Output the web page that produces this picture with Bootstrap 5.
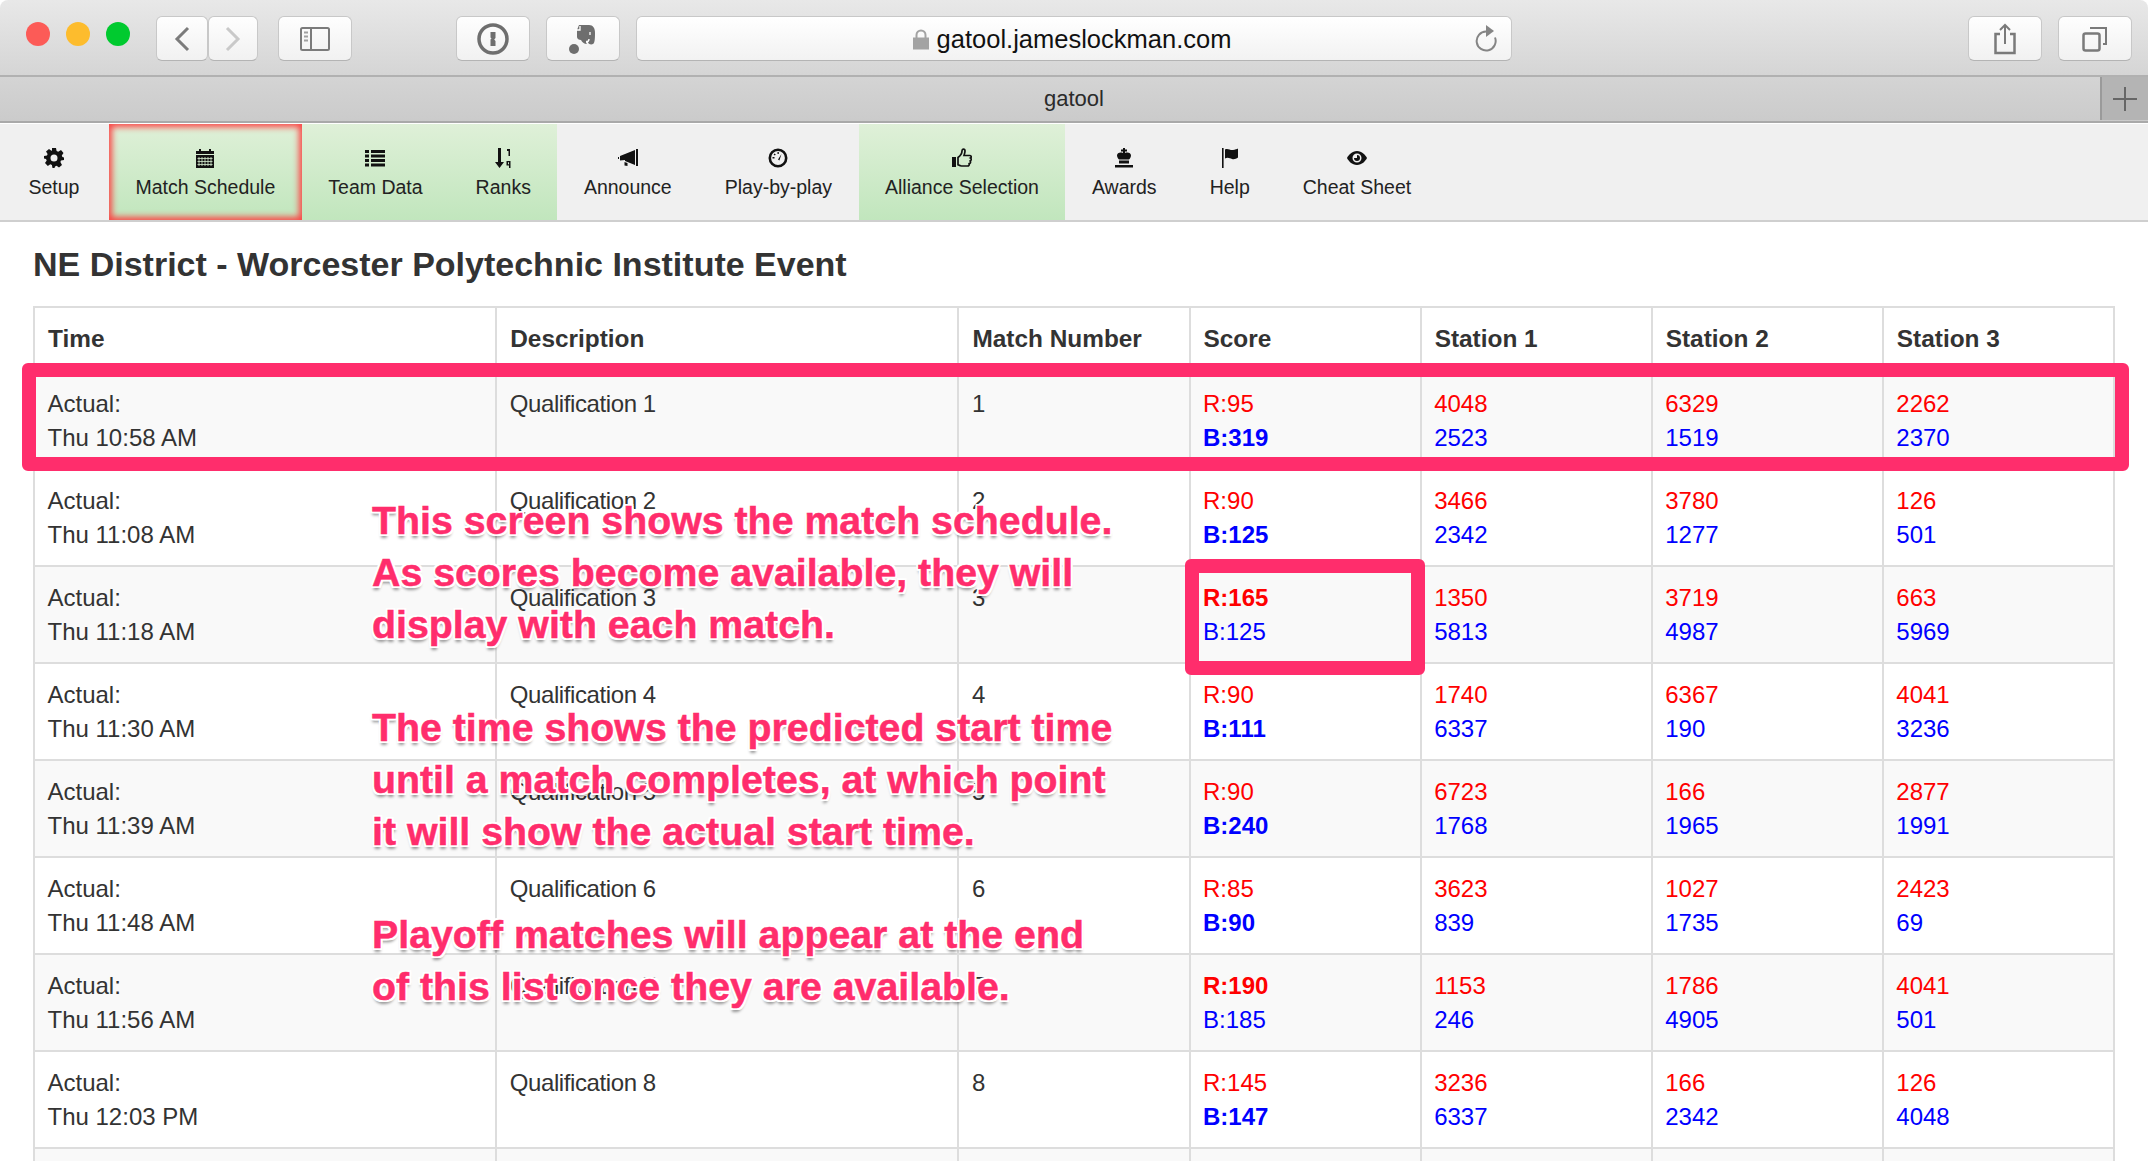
<!DOCTYPE html>
<html lang="en">
<head>
<meta charset="UTF-8">
<title>gatool</title>
<link rel="stylesheet" href="https://cdn.jsdelivr.net/npm/bootstrap@5.3.3/dist/css/bootstrap.min.css">
<style>
html, body { height: 100%; overflow: hidden; }
body { font-family: "Liberation Sans", Arial, sans-serif; background: #fff; color: #333; }
.page-wrap { position: relative; height: 1161px; overflow: hidden; }

.win-bar { height: 75px; padding: 16px 16px 0 26px; background: linear-gradient(#e8e8e8, #d5d5d5); border-radius: 8px 8px 0 0; }
.tl-dot { width: 24px; height: 24px; border-radius: 50%; margin: 6px 16px 0 0; }
.tl-red { background: #fc5b57; }
.tl-yellow { background: #fdbc2d; }
.tl-green { background: #00ca2f; margin-right: 26px; }
.tool-btn { height: 45px; background: linear-gradient(#fefefe, #f1f1f1); border: 1px solid #c8c8c8; border-bottom-color: #b4b4b4; border-radius: 6px; }
.btn-back { width: 52px; }
.btn-fwd { width: 50px; margin-right: 20px; }
.btn-wide { width: 74px; margin-right: 16px; }
.btn-sidebar { margin-right: 104px; }
.btn-share { margin-right: 16px; margin-left: auto; }
.btn-tabs { margin-right: 0; }
.url-box { width: 876px; height: 45px; padding: 1px 4px 0 0; background: linear-gradient(#fff, #f2f2f2); border: 1px solid #c8c8c8; border-bottom-color: #b4b4b4; border-radius: 6px; font-size: 25.5px; color: #111; position: relative; }
.url-reload { position: absolute; right: 13px; top: 7px; }

.tab-strip { height: 48px; padding-bottom: 1px; background: linear-gradient(#d4d4d4, #cbcbcb); border-top: 2px solid #b1b1b1; border-bottom: 2px solid #a9a9a9; font-size: 22px; color: #2b2b2b; }
.tab-title { padding-left: 48px; }
.tab-plus { width: 48px; height: 100%; background: #b4b4b4; border-left: 2px solid #9a9a9a; }

.app-nav { height: 98px; margin-top: 1px; padding: 0 2px; background: #f0f0f0; border-bottom: 2px solid #cfcfcf; }
.app-nav a { height: 96px; padding: 24px 26.5px 0; color: #222; font-size: 19.5px; line-height: 1; text-decoration: none; white-space: nowrap; text-align: center; }
.app-nav svg { display: block; margin: 0 auto 10px; width: 20px; height: 20px; }
.nav-setup { margin-right: 3px; }
.nav-green { background: linear-gradient(#dff0d8, #c1e6bd); }
.nav-current { box-shadow: inset 0 0 6px 3px #fb4545; }

.event-title { margin: 0; padding: 22px 33px 0; height: 84px; font-size: 34px; font-weight: 700; line-height: 40px; color: #333; }

.match-wrap { padding: 0 33px; }
.match-table { table-layout: fixed; width: 2082px; margin: 0; font-size: 24px; line-height: 34px; color: #333; --bs-table-striped-bg: #f9f9f9; --bs-table-striped-color: #333; --bs-table-color: #333; --bs-border-color: #ddd; }
.match-table > :not(caption) > * > * { padding: 14px 13px 11px 12.5px; border-color: #ddd; border-width: 2px; height: 97px; }
.match-table > thead > tr > th { height: 65px; padding: 12px 13px 14px; font-size: 24.4px; font-weight: 700; vertical-align: middle; border-bottom-width: 2px; }
.match-table > tbody { border-top: 0; }
.col-two { width: 22.22%; }
.col-one { width: 11.11%; }
.desc-cell { letter-spacing: -.4px; }
.t-red { color: #f00; display: block; }
.t-blue { color: #00f; display: block; }

.mark-box { position: absolute; border: 14px solid #ff2d6c; border-radius: 6px; }
.mark-row { left: 22px; top: 363px; width: 2107px; height: 108px; }
.mark-score { left: 1185px; top: 559px; width: 240px; height: 116px; }
.note-text { position: absolute; left: 372px; top: 495px; margin: 0; font-size: 39.3px; line-height: 51.8px; font-weight: 700; color: #ff2d6c; white-space: nowrap; -webkit-text-stroke: .5px #ff2d6c; text-shadow: -2px 0 0 #fff, 2px 0 0 #fff, 0 -2px 0 #fff, 0 2px 0 #fff, -2px -2px 0 #fff, 2px -2px 0 #fff, -2px 2px 0 #fff, 2px 2px 0 #fff, 0 4px 3px rgba(0,0,0,.4); }
</style>
</head>
<body>
<div class="page-wrap">

  <div class="win-bar d-flex align-items-start">
    <span class="tl-dot tl-red"></span>
    <span class="tl-dot tl-yellow"></span>
    <span class="tl-dot tl-green"></span>
    <div class="tool-btn btn-back d-flex align-items-center justify-content-center">
      <svg width="18" height="26" viewBox="0 0 18 26"><path d="M15 2 4 13l11 11" fill="none" stroke="#7b7b7b" stroke-width="3"/></svg>
    </div>
    <div class="tool-btn btn-fwd d-flex align-items-center justify-content-center">
      <svg width="18" height="26" viewBox="0 0 18 26"><path d="M3 2l11 11L3 24" fill="none" stroke="#c9c9c9" stroke-width="3"/></svg>
    </div>
    <div class="tool-btn btn-wide btn-sidebar d-flex align-items-center justify-content-center">
      <svg width="30" height="24" viewBox="0 0 30 24"><rect x="1" y="1" width="28" height="22" rx="1.5" fill="none" stroke="#7b7b7b" stroke-width="2"/><path d="M11 1v22" stroke="#7b7b7b" stroke-width="2"/><path d="M4 5.500h4M4 9.500h4M4 13.500h4" stroke="#a0a0a0" stroke-width="2"/></svg>
    </div>
    <div class="tool-btn btn-wide d-flex align-items-center justify-content-center">
      <svg width="32" height="32" viewBox="0 0 32 32"><circle cx="16" cy="16" r="14" fill="none" stroke="#6e6e6e" stroke-width="3.500"/><path d="M13.500 9h5v6l-1.300 1.500 1.300 1.500v5h-5v-6.500l1-1-1-1z" fill="#6e6e6e"/></svg>
    </div>
    <div class="tool-btn btn-wide d-flex align-items-center justify-content-center">
      <svg width="28" height="30" viewBox="0 0 28 30"><circle cx="5" cy="25" r="5" fill="#6e6e6e"/><path d="M10 1h10c4 0 6 3 6 8 0 4 0 10-2 11s-5 0-5-2l-1-2c-1 2-1 3 0 4-3 0-5-2-6-4-2 0-4-1-4-3V6z" fill="#6e6e6e"/><path d="M6 6h5V2M21 8v3M17 18c2 0 3-1 3-3" fill="none" stroke="#fff" stroke-width="1.300"/></svg>
    </div>
    <div class="url-box d-flex align-items-center justify-content-center">
      <svg class="me-2" width="16" height="21" viewBox="0 0 16 21"><path d="M3.500 9V6a4.500 4.500 0 0 1 9 0v3" fill="none" stroke="#a3a3a3" stroke-width="2"/><rect y="8.500" width="16" height="12" fill="#a3a3a3"/></svg>
      <span>gatool.jameslockman.com</span>
      <svg class="url-reload" width="24" height="28" viewBox="0 0 24 28"><path d="M12 7.500a9.500 9.500 0 1 0 9 6" fill="none" stroke="#858585" stroke-width="2"/><path d="M12 1l8 6-8 6z" fill="#858585"/></svg>
    </div>
    <div class="tool-btn btn-wide btn-share d-flex align-items-center justify-content-center">
      <svg width="24" height="32" viewBox="0 0 24 32"><path d="M7 11H2.500v19h19V11H17" fill="none" stroke="#7a7a7a" stroke-width="2.500"/><path d="M12 21V2M7 7l5-5 5 5" fill="none" stroke="#7a7a7a" stroke-width="2"/></svg>
    </div>
    <div class="tool-btn btn-wide btn-tabs d-flex align-items-center justify-content-center">
      <svg width="26" height="26" viewBox="0 0 26 26"><rect x="1.500" y="7.500" width="16" height="17" rx="2" fill="none" stroke="#7a7a7a" stroke-width="2.500"/><path d="M8 2h16v16h-3" fill="none" stroke="#7a7a7a" stroke-width="2"/></svg>
    </div>
  </div>

  <div class="tab-strip d-flex align-items-center">
    <div class="tab-title flex-grow-1 text-center">gatool</div>
    <div class="tab-plus d-flex align-items-center justify-content-center">
      <svg width="24" height="24" viewBox="0 0 24 24"><path d="M12 0v24M0 12h24" stroke="#666" stroke-width="2"/></svg>
    </div>
  </div>

  <nav class="app-nav nav flex-nowrap">
    <a href="#" class="d-block nav-setup">
      <svg viewBox="0 0 20 20"><path fill="#111" fill-rule="evenodd" d="M8 0h4l.6 3 1.600.7L17 2l2.500 3-1.700 2.500.6 1.500 1.600.5v2.500l-3 .6-.6 1.500L18 17l-3 2.500-2.400-1.700-1.600.7-.5 1.500h-2l-.6-3-1.600-.7L3.800 18 1 15l1.700-2.500L2 11l-2-.5V8l3-.6.6-1.500L2 3.500 5 1l2.400 1.700L8 2.500zM10 6.500a3.500 3.500 0 1 0 0 7 3.500 3.500 0 0 0 0-7z"/></svg>
      Setup
    </a>
    <a href="#" class="d-block nav-green nav-current">
      <svg viewBox="0 0 20 20"><path fill="#111" d="M1 3h3V1h2v2h8V1h2v2h3v3H1zM1 7h18v13H1z"/><path stroke="#d6edcf" stroke-width=".8" d="M4 9v9M7 9v9M10 9v9M13 9v9M16 9v9M2.500 10.500h15M2.500 13.500h15M2.500 16.500h15"/></svg>
      Match Schedule
    </a>
    <a href="#" class="d-block nav-green">
      <svg viewBox="0 0 20 20"><path fill="#111" d="M0 2h4v3H0zM6 2h14v3H6zM0 6.500h4v3H0zM6 6.500h14v3H6zM0 11h4v3H0zM6 11h14v3H6zM0 15.500h4v3H0zM6 15.500h14v3H6z"/></svg>
      Team Data
    </a>
    <a href="#" class="d-block nav-green">
      <svg viewBox="0 0 20 20"><path fill="#111" d="M5 0h3v14h3l-4.500 6L2 14h3zM14 1h3v7h-1.500V3H14zM13.500 13h4v7H16v-2.500h-2.500zM15 14.300v2h1v-2z"/></svg>
      Ranks
    </a>
    <a href="#" class="d-block">
      <svg viewBox="0 0 20 20"><path fill="#111" d="M18 1h2v17h-2zM17 2v15L7 13v-1l-5 .5V8l15-6zM6.500 14l3 1v3l-3-.5zM0 9h1v2H0z"/></svg>
      Announce
    </a>
    <a href="#" class="d-block">
      <svg viewBox="0 0 20 20"><circle cx="10" cy="10" r="8.200" fill="none" stroke="#111" stroke-width="2.600"/><path fill="#111" d="M10 11.500 13.500 6 11.400 12.500zM4.500 9h2v1.500h-2zM6.500 5.500l1.300 1-1 1-1.200-1zM9.500 4h1.300v2H9.500z"/></svg>
      Play-by-play
    </a>
    <a href="#" class="d-block nav-green">
      <svg viewBox="0 0 20 20"><path fill="#111" d="M0 9h4v10H0z"/><path fill="none" stroke="#111" stroke-width="1.700" d="M6 9.500c2-1.500 4-3.500 4-6.500 0-2.500 3-2.500 3 0 0 1.500-.5 3-1 4.500h6c1.500 0 1.500 2 .5 2.500 1 .5 1 2.500-.3 3 .6 1 .3 2.500-1 2.700.3 1-.3 2.300-1.700 2.300H9.500c-1.500 0-2.500-.8-3.500-1.300z"/></svg>
      Alliance Selection
    </a>
    <a href="#" class="d-block">
      <svg viewBox="0 0 20 20"><path fill="#111" d="M9 0h2v1.500h2v2h-2V5c3-1 6 0 6 2.500 0 1.500-1 3-2 4H5c-1-1-2-2.500-2-4C3 5 6 4 9 5V3.500H7v-2h2zM5 12.500h10v3H5zM1 17h18v2.500H1z"/></svg>
      Awards
    </a>
    <a href="#" class="d-block">
      <svg viewBox="0 0 20 20"><path fill="#111" d="M2 0h1.600v20H2zM5 1.500c3-1.500 5 1 8 .5 2-.3 4-1 5-1.500v9c-2 1.500-4 2-6 1.500S8 9 5 10.500z"/></svg>
      Help
    </a>
    <a href="#" class="d-block">
      <svg viewBox="0 0 20 20"><path fill="#111" fill-rule="evenodd" d="M10 3c5 0 8.500 4 10 7-1.500 3-5 7-10 7S1.500 13 0 10c1.500-3 5-7 10-7zm0 2.500a4.500 4.500 0 1 0 0 9 4.500 4.500 0 0 0 0-9z"/><path fill="#111" d="M10 7a3 3 0 1 1-3 3h3z"/></svg>
      Cheat Sheet
    </a>
  </nav>

  <h1 class="event-title">NE District - Worcester Polytechnic Institute Event</h1>

  <div class="match-wrap">
    <table class="table table-bordered table-striped match-table">
      <colgroup>
        <col class="col-two"><col class="col-two"><col class="col-one"><col class="col-one"><col class="col-one"><col class="col-one"><col class="col-one">
      </colgroup>
      <thead>
        <tr><th>Time</th><th>Description</th><th>Match Number</th><th>Score</th><th>Station 1</th><th>Station 2</th><th>Station 3</th></tr>
      </thead>
      <tbody id="matchRows"></tbody>
    </table>
  </div>

  <div class="mark-box mark-row"></div>
  <div class="mark-box mark-score"></div>
  <p class="note-text">This screen shows the match schedule.<br>As scores become available, they will<br>display with each match.<br><br>The time shows the predicted start time<br>until a match completes, at which point<br>it will show the actual start time.<br><br>Playoff matches will appear at the end<br>of this list once they are available.</p>

</div>

<script>
    // time, red score, blue score, red teams, blue teams
    const matches = [
        ['Thu 10:58 AM', 95, 319, [4048, 6329, 2262], [2523, 1519, 2370]],
        ['Thu 11:08 AM', 90, 125, [3466, 3780, 126], [2342, 1277, 501]],
        ['Thu 11:18 AM', 165, 125, [1350, 3719, 663], [5813, 4987, 5969]],
        ['Thu 11:30 AM', 90, 111, [1740, 6367, 4041], [6337, 190, 3236]],
        ['Thu 11:39 AM', 90, 240, [6723, 166, 2877], [1768, 1965, 1991]],
        ['Thu 11:48 AM', 85, 90, [3623, 1027, 2423], [839, 1735, 69]],
        ['Thu 11:56 AM', 190, 185, [1153, 1786, 4041], [246, 4905, 501]],
        ['Thu 12:03 PM', 145, 147, [3236, 166, 126], [6337, 2342, 4048]]
    ];

    const rows = matches.map((m, i) => {
        const red = m[1] > m[2] ? `<b>R:${m[1]}</b>` : `R:${m[1]}`;
        const blue = m[2] > m[1] ? `<b>B:${m[2]}</b>` : `B:${m[2]}`;
        const teams = m[3].map((t, j) =>
            `<td><span class="t-red">${t}</span><span class="t-blue">${m[4][j]}</span></td>`).join('');
        return `<tr><td>Actual:<br>${m[0]}</td><td class="desc-cell">Qualification ${i + 1}</td><td>${i + 1}</td>` +
            `<td><span class="t-red">${red}</span><span class="t-blue">${blue}</span></td>${teams}</tr>`;
    });
    rows.push('<tr>' + '<td></td>'.repeat(7) + '</tr>');
    document.getElementById('matchRows').innerHTML = rows.join('');
</script>
<script src="https://cdn.jsdelivr.net/npm/bootstrap@5.3.3/dist/js/bootstrap.bundle.min.js"></script>
</body>
</html>
